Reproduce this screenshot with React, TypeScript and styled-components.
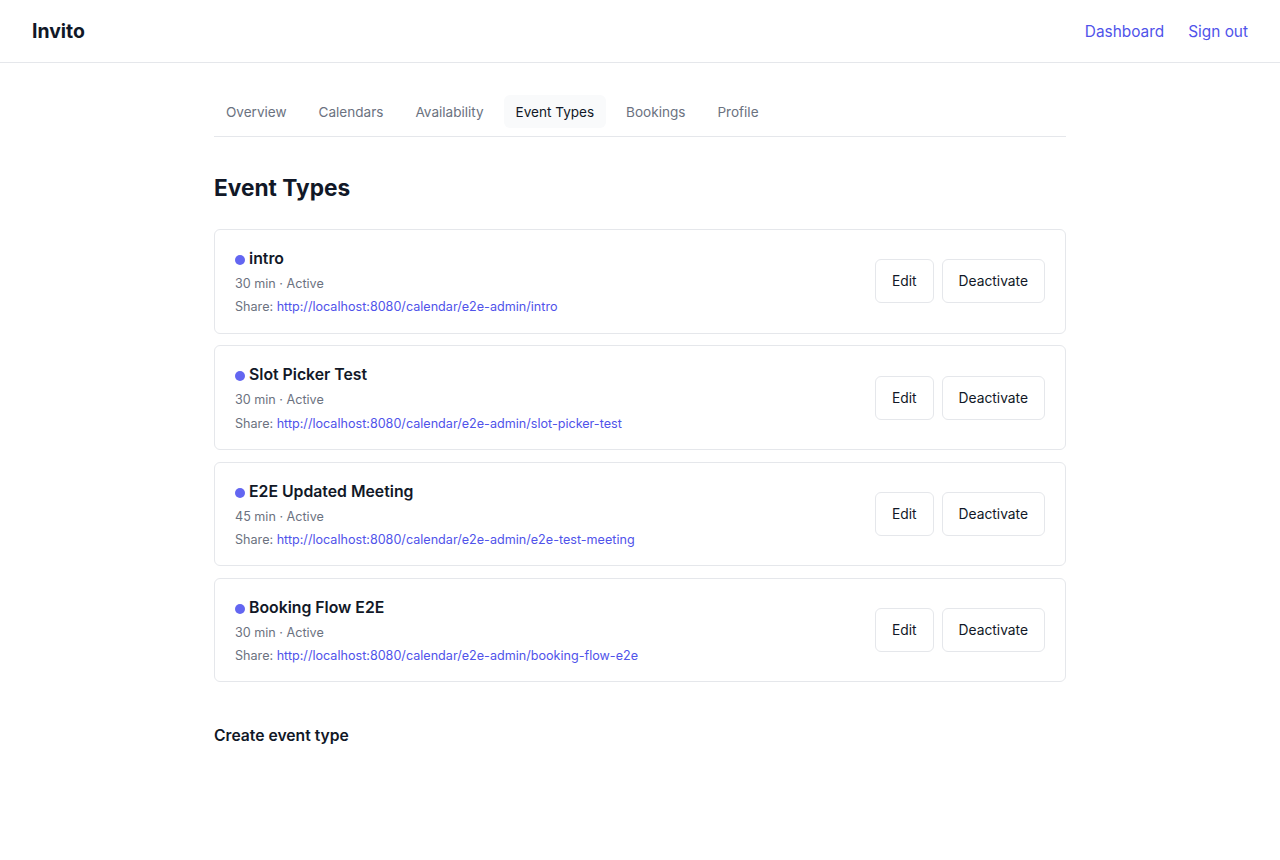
import styled, { createGlobalStyle } from "styled-components";

const GlobalStyle = createGlobalStyle`
  * {
    box-sizing: border-box;
  }
  body {
    margin: 0;
    background: #fff;
    color: #111827;
    font-family: Inter, "Noto Sans", sans-serif;
    line-height: 1.5;
  }
`;

const Header = styled.header`
  height: 63px;
  display: flex;
  align-items: center;
  justify-content: space-between;
  padding: 0 32px;
  border-bottom: 1px solid #e5e7eb;
`;
const Brand = styled.div`
  padding-top: 1px;
  font-size: 19.4px;
  font-weight: 700;
`;
const HeaderLinks = styled.div`
  display: flex;
  gap: 24px;
`;
const HeaderLink = styled.a`
  font-size: 15.4px;
  line-height: 24px;
  padding-top: 1px;
  color: #5053ea;
  text-decoration: none;
`;
const Main = styled.main`
  max-width: 900px;
  margin: 0 auto;
  padding: 32px 24px;
`;
const Tabs = styled.nav`
  display: flex;
  gap: 8px;
  padding-bottom: 8px;
  margin-bottom: 32px;
  border-bottom: 1px solid #e5e7eb;
`;
const Tab = styled.a<{ $active?: boolean }>`
  padding: 7px 12px 5px;
  border-radius: 6px;
  font-size: 13.56px;
  line-height: 21px;
  color: ${(p) => (p.$active ? "#111827" : "#6b7280")};
  background: ${(p) => (p.$active ? "#f9fafb" : "transparent")};
`;
const Title = styled.h1`
  margin: 0 0 24px;
  padding-top: 1px;
  font-size: 22.7px;
  line-height: 35px;
  font-weight: 700;
`;
const Card = styled.div`
  display: flex;
  align-items: center;
  justify-content: space-between;
  padding: 16px 20px;
  margin-bottom: 11.83px;
  border: 1px solid #e5e7eb;
  border-radius: 6px;
`;
const Name = styled.div`
  margin: 1px 0 3px;
  font-size: 15.8px;
  line-height: 24px;
  font-weight: 600;
`;
const Dot = styled.span`
  display: inline-block;
  width: 10px;
  height: 10px;
  margin-right: 4px;
  border-radius: 50%;
  background: #6366f1;
  transform: translateY(1px);
`;
const Meta = styled.div`
  font-size: 12.6px;
  line-height: 19.25px;
  color: #6b7280;

  & + & {
    margin-top: 4px;
  }
`;
const ShareLink = styled.a`
  color: #5053ea;
  text-decoration: none;
`;
const Actions = styled.div`
  display: flex;
  gap: 8px;
`;
const Button = styled.button`
  height: 44px;
  padding: 0 16px;
  background: #fff;
  border: 1px solid #e5e7eb;
  border-radius: 6px;
  color: #111827;
  font-family: inherit;
  font-size: 13.8px;
`;
const SubTitle = styled.h2`
  margin: 41.5px 0 0;
  font-size: 15.68px;
  line-height: 24px;
  font-weight: 600;
`;

const tabs = ["Overview", "Calendars", "Availability", "Event Types", "Bookings", "Profile"];

const eventTypes = [
  { name: "intro", duration: 30, slug: "intro" },
  { name: "Slot Picker Test", duration: 30, slug: "slot-picker-test" },
  { name: "E2E Updated Meeting", duration: 45, slug: "e2e-test-meeting" },
  { name: "Booking Flow E2E", duration: 30, slug: "booking-flow-e2e" },
];

export default function App() {
  return (
    <>
      <GlobalStyle />
      <Header>
        <Brand>Invito</Brand>
        <HeaderLinks>
          <HeaderLink>Dashboard</HeaderLink>
          <HeaderLink>Sign out</HeaderLink>
        </HeaderLinks>
      </Header>
      <Main>
        <Tabs>
          {tabs.map((t) => (
            <Tab key={t} $active={t === "Event Types"}>
              {t}
            </Tab>
          ))}
        </Tabs>
        <Title>Event Types</Title>
        {eventTypes.map((e) => (
          <Card key={e.slug}>
            <div>
              <Name>
                <Dot />
                {e.name}
              </Name>
              <Meta>{e.duration} min · Active</Meta>
              <Meta>
                Share: <ShareLink>http://localhost:8080/calendar/e2e-admin/{e.slug}</ShareLink>
              </Meta>
            </div>
            <Actions>
              <Button>Edit</Button>
              <Button>Deactivate</Button>
            </Actions>
          </Card>
        ))}
        <SubTitle>Create event type</SubTitle>
      </Main>
    </>
  );
}
